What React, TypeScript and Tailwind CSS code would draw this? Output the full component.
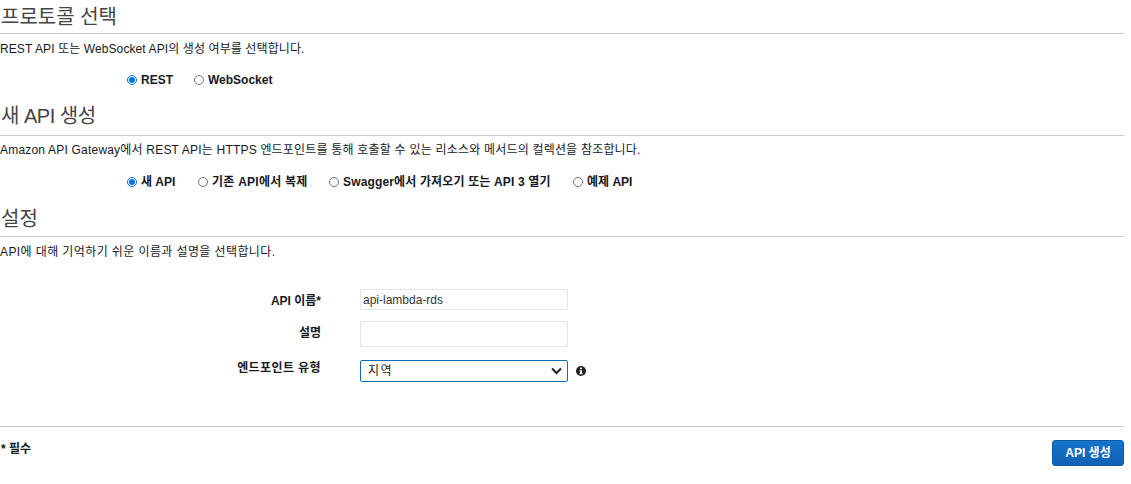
const font = "font-['Liberation_Sans','Noto_Sans_CJK_KR',sans-serif]";

function Radio({ label, checked, className }: { label: string; checked?: boolean; className: string }) {
  return (
    <label className={`flex items-center text-[12px] font-bold text-[#16191f] ${className}`}>
      <input type="radio" readOnly checked={!!checked} className="mr-[4px] h-[10px] w-[10px] accent-[#0073e6]" />
      {label}
    </label>
  );
}

function Section({ title, desc, h, track, descPad }: { title: React.ReactNode; desc: string; h: string; track: string; descPad: string }) {
  return (
    <>
      <h2 className={`flex items-center text-[20px] font-normal text-[#444] ${h}`}>{title}</h2>
      <div className="border-t border-[#ccc]" />
      <p className={`text-[12px] leading-[15px] text-[#16191f] ${descPad} ${track}`}>{desc}</p>
    </>
  );
}

function Row({ label, className, labelClass, children }: { label: string; className: string; labelClass: string; children: React.ReactNode }) {
  return (
    <div className={`flex items-start ${className}`}>
      <div className={`w-[321px] text-right text-[12px] font-bold leading-[15px] text-[#16191f] ${labelClass}`}>{label}</div>
      <div className="ml-[39px] flex items-center">{children}</div>
    </div>
  );
}

export default function App() {
  return (
    <div className={`${font} h-[484px] w-[1131px] overflow-hidden bg-white`}>
      <div className="w-[1124px]">
        <Section h="h-[33px] pl-[1px]" descPad="pt-[8px]" track="tracking-[0.1px]" title="프로토콜 선택" desc="REST API 또는 WebSocket API의 생성 여부를 선택합니다." />
        <div className="flex h-[33px] items-end pl-[127px] pb-[1px]">
          <Radio checked label="REST" className="w-[67px]" />
          <Radio label="WebSocket" className="" />
        </div>
        <Section h="h-[45px] pl-[1px] pt-[7px] tracking-[-0.5px]" descPad="pt-[7px]" track="tracking-[0.2px]" title="새 API 생성" desc="Amazon API Gateway에서 REST API는 HTTPS 엔드포인트를 통해 호출할 수 있는 리소스와 메서드의 컬렉션을 참조합니다." />
        <div className="flex h-[33px] items-end pl-[127px]">
          <Radio checked label="새 API" className="w-[71px]" />
          <Radio label="기존 API에서 복제" className="w-[131px] tracking-[0.25px]" />
          <Radio label="Swagger에서 가져오기 또는 API 3 열기" className="w-[244px] tracking-[0.15px]" />
          <Radio label="예제 API" className="" />
        </div>
        <Section h="h-[45px] pl-[1px] pt-[10px]" descPad="pt-[8px]" track="tracking-[0.4px]" title="설정" desc="API에 대해 기억하기 쉬운 이름과 설명을 선택합니다." />
        <Row label="API 이름*" labelClass="pt-[5px]" className="mt-[29px] h-[32px]">
          <input readOnly value="api-lambda-rds" className="h-[21px] w-[208px] rounded-[2px] border border-[#e1e4e8] bg-white px-[2px] text-[12px] text-[#333]" />
        </Row>
        <Row label="설명" labelClass="pt-[5px]" className="h-[39px]">
          <input readOnly className="h-[26px] w-[208px] rounded-[2px] border border-[#e1e4e8] bg-white" />
        </Row>
        <Row label="엔드포인트 유형" labelClass="pt-[1px] tracking-[0.4px]" className="h-[66px]">
          <div className="flex h-[22px] w-[208px] items-center justify-between rounded-[2px] border border-[#0b6fb8] bg-white pl-[7px] pr-[5px] text-[12px] text-[#16191f]">
            <span className="tracking-[1.5px]">지역</span>
            <svg width="11" height="8" viewBox="0 0 11 8" fill="none" stroke="#222" strokeWidth="2">
              <path d="M1 1.5 L5.5 6 L10 1.5" />
            </svg>
          </div>
          <svg className="ml-[8px]" width="10" height="10" viewBox="0 0 10 10">
            <circle cx="5" cy="5" r="5" fill="#222" />
            <rect x="4" y="1.6" width="2" height="1.6" fill="#fff" />
            <path d="M3.4 4.2 H6 V7.2 H6.8 V8.2 H3.4 V7.2 H4.2 V5.2 H3.4 Z" fill="#fff" />
          </svg>
        </Row>
        <div className="border-t border-[#ccc]" />
        <div className="flex items-start justify-between pt-[13px]">
          <span className="mt-[2px] pl-[1px] text-[12px] font-bold leading-[15px] text-[#16191f]">* 필수</span>
          <button className="h-[26px] w-[72px] rounded-[3px] border border-[#0b5aa5] bg-gradient-to-b from-[#1673c9] to-[#0f62b4] text-[12px] font-bold text-white">API 생성</button>
        </div>
      </div>
    </div>
  );
}
